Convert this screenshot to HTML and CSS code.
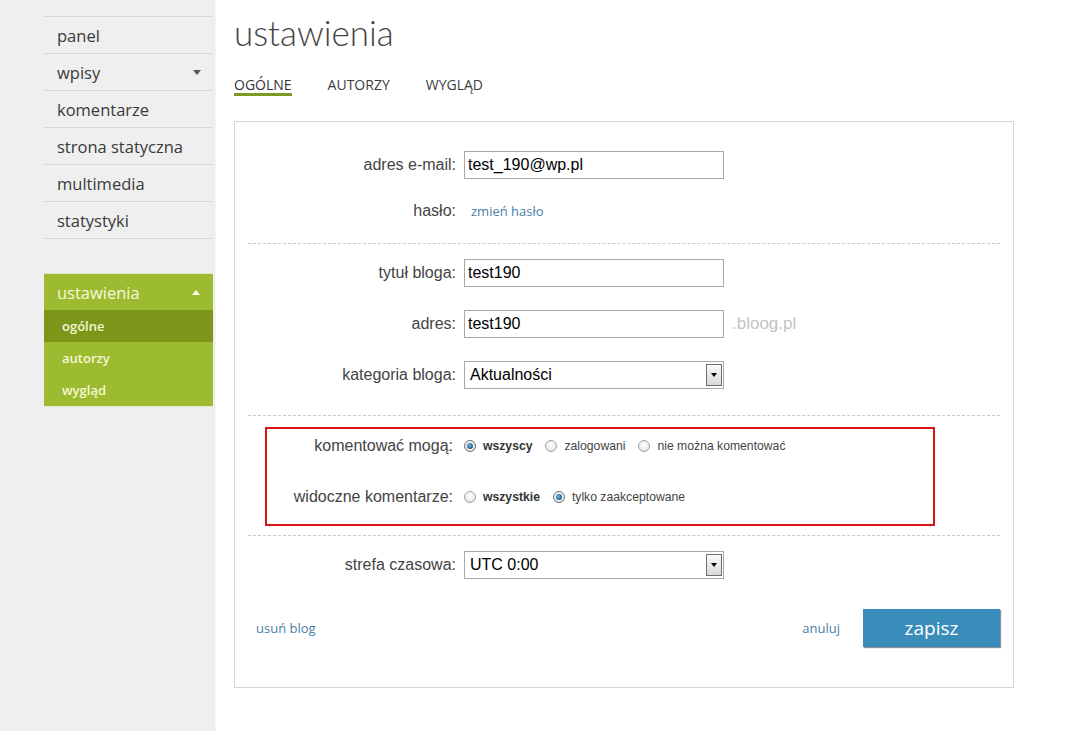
FILE: index.html
```html
<!DOCTYPE html>
<html lang="pl">
<head>
<meta charset="utf-8">
<title>ustawienia</title>
<link rel="stylesheet" href="styles.css">
</head>
<body>
<div class="page">
  <aside class="sidebar">
    <ul class="nav">
      <li class="nav-item">panel</li>
      <li class="nav-item">wpisy <span class="tri-down"></span></li>
      <li class="nav-item">komentarze</li>
      <li class="nav-item">strona statyczna</li>
      <li class="nav-item">multimedia</li>
      <li class="nav-item">statystyki</li>
    </ul>
    <div class="group">
      <div class="group-head">ustawienia <span class="tri-up"></span></div>
      <div class="sub sub-active">ogólne</div>
      <div class="sub">autorzy</div>
      <div class="sub">wygląd</div>
    </div>
  </aside>

  <main class="main">
    <h1 class="title">ustawienia</h1>
    <nav class="tabs">
      <span class="tab tab-active">OGÓLNE</span>
      <span class="tab">AUTORZY</span>
      <span class="tab">WYGLĄD</span>
    </nav>

    <div class="card">
      <section class="sec sec1">
        <div class="row">
          <label class="lbl">adres e-mail:</label>
          <div class="field">test_190@wp.pl</div>
        </div>
        <div class="row row-short">
          <label class="lbl">hasło:</label>
          <a class="link link-pass">zmień hasło</a>
        </div>
      </section>

      <section class="sec sec2">
        <div class="row">
          <label class="lbl">tytuł bloga:</label>
          <div class="field">test190</div>
        </div>
        <div class="row">
          <label class="lbl">adres:</label>
          <div class="field">test190</div>
          <span class="suffix">.bloog.pl</span>
        </div>
        <div class="row">
          <label class="lbl">kategoria bloga:</label>
          <div class="select"><span class="select-text">Aktualności</span><span class="select-btn"><span class="tri-black"></span></span></div>
        </div>
      </section>

      <section class="sec sec3">
        <div class="redbox">
          <div class="rrow">
            <label class="rlbl">komentować mogą:</label>
            <span class="radio checked"></span><span class="opt bold">wszyscy</span>
            <span class="radio"></span><span class="opt">zalogowani</span>
            <span class="radio"></span><span class="opt">nie można komentować</span>
          </div>
          <div class="rrow rrow2">
            <label class="rlbl">widoczne komentarze:</label>
            <span class="radio"></span><span class="opt bold">wszystkie</span>
            <span class="radio checked"></span><span class="opt">tylko zaakceptowane</span>
          </div>
        </div>
      </section>

      <section class="sec sec4">
        <div class="row">
          <label class="lbl">strefa czasowa:</label>
          <div class="select"><span class="select-text">UTC 0:00</span><span class="select-btn"><span class="tri-black"></span></span></div>
        </div>
        <div class="footer">
          <a class="link link-del">usuń blog</a>
          <a class="link link-cancel">anuluj</a>
          <button class="save">zapisz</button>
        </div>
      </section>
    </div>
  </main>
</div>
</body>
</html>
```

FILE: styles.css
```css
* { box-sizing: border-box; }
html, body { margin: 0; padding: 0; background: #fff; }
body { font-family: "Liberation Sans", Arial, sans-serif; color: #444; }

.page { display: flex; min-height: 731px; }

/* Sidebar */
.sidebar {
  width: 214px;
  flex: 0 0 214px;
  background: #efefef;
  box-shadow: 1px 0 2px rgba(0,0,0,0.10);
  padding-top: 16px;
  padding-left: 44px;
  padding-right: 1px;
}
.nav { list-style: none; margin: 0; padding: 0; border-bottom: 1px solid #d9d9d9; }
.nav-item {
  display: flex;
  align-items: center;
  justify-content: space-between;
  height: 37px;
  border-top: 1px solid #d9d9d9;
  padding: 0 12px 0 13px;
  font-family: "Open Sans", sans-serif;
  font-size: 16.5px;
  color: #3a3a3a;
}
.tri-down {
  width: 0; height: 0;
  border-left: 4.5px solid transparent;
  border-right: 4.5px solid transparent;
  border-top: 5px solid #555;
}
.group {
  margin-top: 34px;
  background: #9dbb30;
  border-top: 1px solid #dfe8c0;
  border-bottom: 1px solid #e4ebcc;
}
.group-head {
  display: flex;
  align-items: center;
  justify-content: space-between;
  height: 36px;
  padding: 0 13px 0 13px;
  font-family: "Open Sans", sans-serif;
  font-size: 16.5px;
  color: #f6f9dc;
}
.tri-up {
  width: 0; height: 0;
  border-left: 4.5px solid transparent;
  border-right: 4.5px solid transparent;
  border-bottom: 5px solid #fbfdee;
}
.sub {
  height: 32px;
  line-height: 32px;
  padding-left: 18px;
  font-family: "Open Sans", sans-serif;
  font-size: 13px;
  font-weight: 600;
  color: #f4f8d4;
}
.sub-active { background: #7b9619; }

/* Main */
.main { flex: 1; padding-left: 20px; }
.title {
  margin: 12px 0 0 0;
  font-family: Lato, Roboto, sans-serif;
  font-weight: 300;
  font-size: 35px;
  line-height: 40px;
  color: #444;
}
.tabs { display: flex; gap: 36px; margin-top: 24px; }
.tab {
  font-family: "Open Sans", sans-serif;
  font-size: 14px;
  line-height: 17px;
  color: #3d3d3d;
  padding-bottom: 3px;
}
.tab-active { border-bottom: 3px solid #7d9a25; padding-bottom: 0; color: #333; }

.card {
  margin-top: 25px;
  width: 780px;
  border: 1px solid #d6d6d6;
  background: #fff;
}
.sec { margin: 0 13px; }
.sec1, .sec2, .sec3 { border-bottom: 1px dashed #c9c9c9; }
.sec1 { padding: 29px 0 22px; }
.sec2 { padding: 15px 0 26px; display: flex; flex-direction: column; gap: 23px; }
.sec3 { padding: 11px 0 9px; }
.sec4 { padding: 15px 0 40px; }

.row { display: flex; align-items: center; height: 28px; }
.row-short { height: 20px; margin-top: 22px; }
.lbl {
  width: 208px;
  text-align: right;
  font-size: 16px;
  color: #444;
  margin-right: 8px;
}
.field {
  width: 260px;
  height: 28px;
  border: 1px solid #a9a9a9;
  padding: 0 3px;
  font-size: 16px;
  line-height: 26px;
  color: #000;
}
.suffix { margin-left: 8px; font-size: 17px; color: #c3c3c3; }
.link {
  font-family: "Open Sans", sans-serif;
  font-size: 13px;
  color: #4a80a8;
  text-decoration: none;
}
.link-pass { margin-left: 7px; }

.select {
  width: 260px;
  height: 28px;
  border: 1px solid #a9a9a9;
  display: flex;
  align-items: center;
  justify-content: space-between;
  padding: 0 1px 0 5px;
}
.select-text { font-size: 16px; color: #000; }
.select-btn {
  width: 16px;
  height: 22px;
  border: 1px solid #6f6f6f;
  background: linear-gradient(#fafafa, #d8d8d8);
  display: flex;
  align-items: center;
  justify-content: center;
}
.tri-black {
  width: 0; height: 0;
  border-left: 3.5px solid transparent;
  border-right: 3.5px solid transparent;
  border-top: 4px solid #000;
}

/* red box */
.redbox {
  margin-left: 17px;
  width: 670px;
  height: 99px;
  border: 2px solid #d41616;
  padding-top: 7px;
}
.rrow { display: flex; align-items: center; height: 20px; }
.rrow2 { margin-top: 31px; }
.rlbl {
  width: 186px;
  text-align: right;
  font-size: 16px;
  color: #444;
  margin-right: 11px;
}
.radio {
  width: 12px;
  height: 12px;
  border-radius: 50%;
  border: 1px solid #a2a2a2;
  background: radial-gradient(circle at 50% 40%, #ffffff 0%, #ececec 60%, #d4d4d4 100%);
  display: inline-flex;
  align-items: center;
  justify-content: center;
  margin-right: 7px;
  flex: 0 0 12px;
}
.radio.checked { border-color: #6d6d6d; }
.radio.checked::after {
  content: "";
  width: 6px;
  height: 6px;
  border-radius: 50%;
  background: radial-gradient(circle at 40% 40%, #7fb4dc 0%, #2a6fa3 55%, #123e66 100%);
}
.opt { font-size: 12.2px; color: #444; margin-right: 13px; }
.opt.bold { font-weight: bold; color: #333; }

.footer { display: flex; align-items: center; margin-top: 30px; height: 38px; }
.link-del { margin-left: 8px; }
.link-cancel { margin-left: auto; margin-right: 23px; }
.save {
  width: 137px;
  height: 38px;
  border: none;
  background: #3a8dbb;
  color: #fff;
  font-family: "Open Sans", sans-serif;
  font-size: 19px;
  box-shadow: 1px 1px 1px rgba(40,60,80,0.55);
  padding: 0;
}
```
